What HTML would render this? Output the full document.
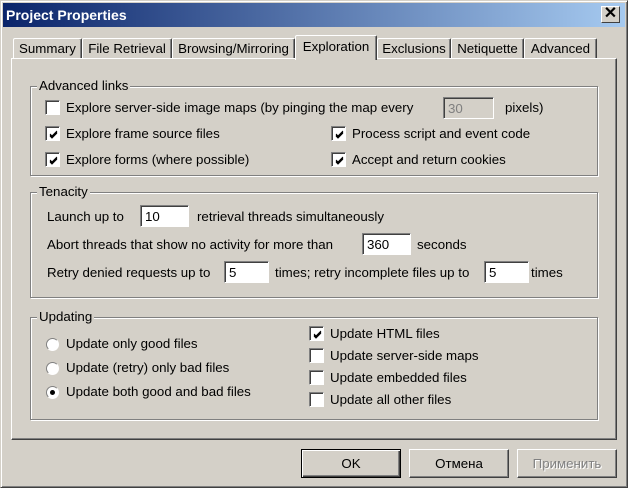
<!DOCTYPE html><html><head><style>
*{box-sizing:border-box}
body{margin:0;width:628px;height:488px;background:#d4d0c8;font-family:"Liberation Sans",Arial,sans-serif;font-size:13.3px;color:#000;position:relative;overflow:hidden}
.a{position:absolute;white-space:nowrap}
.win{position:absolute;left:0;top:0;width:628px;height:488px;border:1px solid;border-color:#d4d0c8 #404040 #404040 #d4d0c8;box-shadow:inset 1px 1px #fff,inset -1px -1px #808080}
.title{position:absolute;left:3px;top:3px;width:622px;height:24px;background:linear-gradient(90deg,#0a246a,#a6caf0);color:#fff;font-weight:bold;font-size:14px;padding:4px 3px}
.xb{position:absolute;left:601px;top:6px;width:19px;height:17px;background:#d4d0c8;border:1px solid;border-color:#fff #404040 #404040 #fff;font-size:16px;line-height:14px;text-align:center;font-weight:bold}
.tab{position:absolute;top:38px;height:21px;border:1px solid;border-color:#fff #404040 transparent #fff;border-bottom:none;border-radius:2px 2px 0 0;padding:2px 0 0;text-align:center;box-shadow:inset -1px 0 #808080}
.tab.sel{top:35px;height:25px;background:#d4d0c8;z-index:2;padding-top:3px}
.panel{position:absolute;left:11px;top:58px;width:606px;height:382px;border:1px solid;border-color:#fff #404040 #404040 #fff;box-shadow:inset -1px -1px #808080}
.grp{position:absolute;border:1px solid #808080;box-shadow:1px 1px #fff,inset 1px 1px #fff}
.gl{position:absolute;background:#d4d0c8;padding:0 2px;top:-9px;left:6px}
.cb{position:absolute;width:15px;height:15px;background:#fff;border:1px solid;border-color:#808080 #fff #fff #808080;box-shadow:inset 1px 1px #404040}
.cb svg{position:absolute;left:3px;top:3px}
.rb{position:absolute;width:13px;height:13px;border-radius:50%;background:#fff;border:1px solid;border-color:#808080 #fff #fff #808080}
.ed{position:absolute;height:22px;background:#fff;border:1px solid;border-color:#808080 #fff #fff #808080;box-shadow:inset 1px 1px #404040;padding:3px 4px}
.btn{position:absolute;top:449px;width:100px;height:29px;border:1px solid;border-color:#fff #404040 #404040 #fff;box-shadow:inset -1px -1px #808080;text-align:center;padding-top:6px}
</style></head><body>
<div class="win"></div>
<div class="title">Project Properties</div>
<div class="xb">✕</div>
<div class="tab" style="left:13px;width:69px">Summary</div>
<div class="tab" style="left:82px;width:90px">File Retrieval</div>
<div class="tab" style="left:172px;width:123px">Browsing/Mirroring</div>
<div class="tab sel" style="left:295px;width:82px">Exploration</div>
<div class="tab" style="left:377px;width:74px">Exclusions</div>
<div class="tab" style="left:451px;width:73px">Netiquette</div>
<div class="tab" style="left:524px;width:73px">Advanced</div>
<div class="panel"></div>

<div class="grp" style="left:30px;top:86px;width:568px;height:90px"><span class="gl">Advanced links</span></div>
<div class="cb" style="left:45px;top:100px"></div><span class="a" style="left:66px;top:100px">Explore server-side image maps (by pinging the map every</span>
<div class="ed" style="left:443px;top:97px;width:51px;background:#d4d0c8;color:#808080">30</div><span class="a" style="left:505px;top:100px">pixels)</span>
<div class="cb" style="left:45px;top:126px"><svg width="9" height="9"><path d="M1 4l2 2 5-5M1 5l2 2 5-5M1 6l2 2 5-5" stroke="#000" fill="none"/></svg></div><span class="a" style="left:66px;top:126px">Explore frame source files</span>
<div class="cb" style="left:45px;top:152px"><svg width="9" height="9"><path d="M1 4l2 2 5-5M1 5l2 2 5-5M1 6l2 2 5-5" stroke="#000" fill="none"/></svg></div><span class="a" style="left:66px;top:152px">Explore forms (where possible)</span>
<div class="cb" style="left:331px;top:126px"><svg width="9" height="9"><path d="M1 4l2 2 5-5M1 5l2 2 5-5M1 6l2 2 5-5" stroke="#000" fill="none"/></svg></div><span class="a" style="left:352px;top:126px">Process script and event code</span>
<div class="cb" style="left:331px;top:152px"><svg width="9" height="9"><path d="M1 4l2 2 5-5M1 5l2 2 5-5M1 6l2 2 5-5" stroke="#000" fill="none"/></svg></div><span class="a" style="left:352px;top:152px">Accept and return cookies</span>

<div class="grp" style="left:30px;top:192px;width:568px;height:106px"><span class="gl">Tenacity</span></div>
<span class="a" style="left:47px;top:209px">Launch up to</span><div class="ed" style="left:140px;top:205px;width:49px">10</div><span class="a" style="left:197px;top:209px">retrieval threads simultaneously</span>
<span class="a" style="left:47px;top:237px">Abort threads that show no activity for more than</span><div class="ed" style="left:362px;top:233px;width:49px">360</div><span class="a" style="left:417px;top:237px">seconds</span>
<span class="a" style="left:47px;top:265px">Retry denied requests up to</span><div class="ed" style="left:224px;top:261px;width:45px">5</div><span class="a" style="left:275px;top:265px">times; retry incomplete files up to</span><div class="ed" style="left:484px;top:261px;width:45px">5</div><span class="a" style="left:531px;top:265px">times</span>

<div class="grp" style="left:30px;top:317px;width:568px;height:103px"><span class="gl">Updating</span></div>
<div class="rb" style="left:46px;top:338px"></div><span class="a" style="left:66px;top:336px">Update only good files</span>
<div class="rb" style="left:46px;top:362px"></div><span class="a" style="left:66px;top:360px">Update (retry) only bad files</span>
<div class="rb" style="left:46px;top:386px"><div style="position:absolute;left:3px;top:3px;width:5px;height:5px;border-radius:50%;background:#000"></div></div><span class="a" style="left:66px;top:384px">Update both good and bad files</span>
<div class="cb" style="left:309px;top:326px"><svg width="9" height="9"><path d="M1 4l2 2 5-5M1 5l2 2 5-5M1 6l2 2 5-5" stroke="#000" fill="none"/></svg></div><span class="a" style="left:330px;top:326px">Update HTML files</span>
<div class="cb" style="left:309px;top:348px"></div><span class="a" style="left:330px;top:348px">Update server-side maps</span>
<div class="cb" style="left:309px;top:370px"></div><span class="a" style="left:330px;top:370px">Update embedded files</span>
<div class="cb" style="left:309px;top:392px"></div><span class="a" style="left:330px;top:392px">Update all other files</span>

<div class="btn" style="left:301px;border-color:#000;box-shadow:inset 1px 1px #fff,inset -1px -1px #404040,inset -2px -2px #808080">OK</div>
<div class="btn" style="left:409px">Отмена</div>
<div class="btn" style="left:517px;color:#808080;text-shadow:1px 1px #fff">Применить</div>
</body></html>
